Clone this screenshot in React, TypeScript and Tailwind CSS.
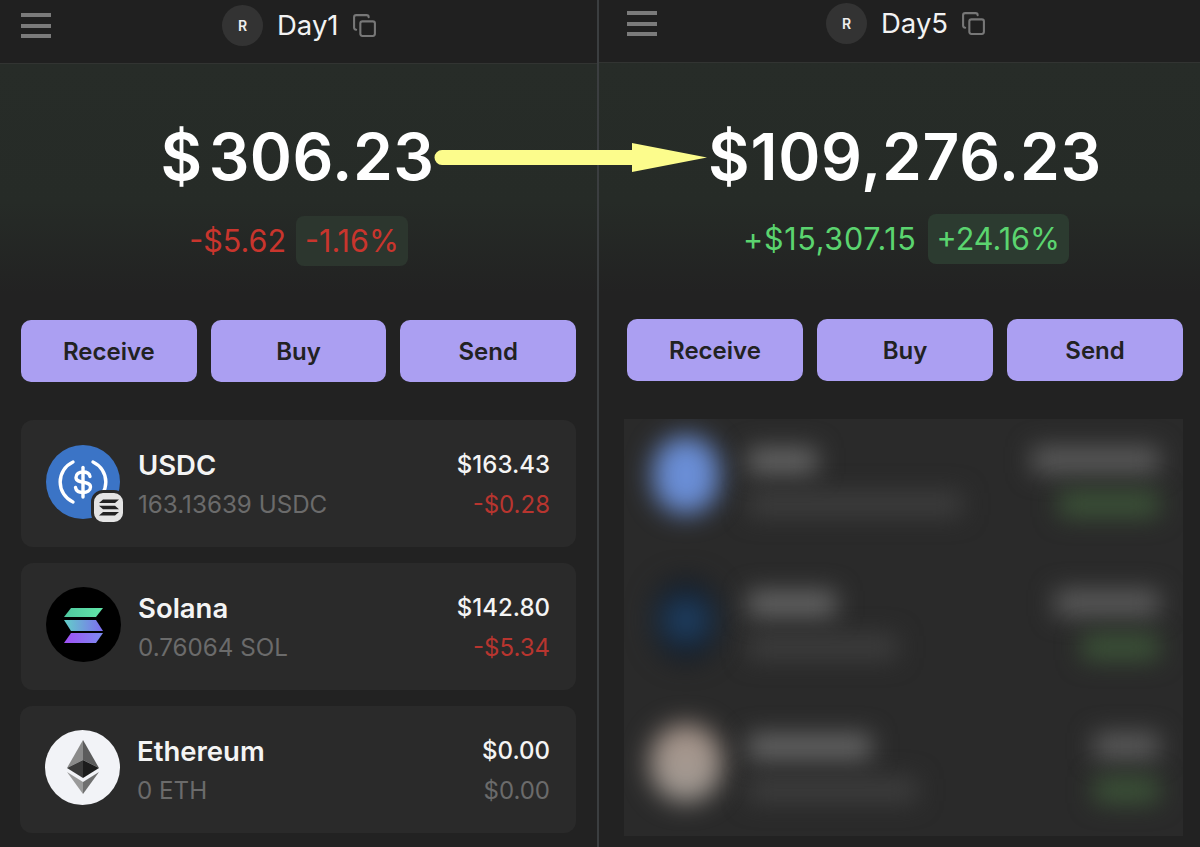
import { Copy } from "lucide-react";

function Hamburger() {
  return (
    <div className="flex w-[30px] flex-col gap-[6.5px] pt-[8px]">
      <div className="h-[4px] bg-[#7b7b7b]" />
      <div className="h-[4px] bg-[#7b7b7b]" />
      <div className="h-[4px] bg-[#7b7b7b]" />
    </div>
  );
}

function Header({ name, pad, gapLeft, height }: { name: string; pad: string; gapLeft: string; height: string }) {
  return (
    <div className={`flex items-start border-b border-[#323432] bg-[#202020] ${pad} ${height}`}>
      <Hamburger />
      <div className={`flex items-center ${gapLeft}`}>
        <div className="flex h-[41px] w-[41px] items-center justify-center rounded-full bg-[#333333] text-[14px] font-semibold text-[#eeeeee]">
          R
        </div>
        <div className="ml-[14px] text-[27.5px] leading-[41px] text-[#f2f2f2]">{name}</div>
        <Copy size={25} strokeWidth={2} className="ml-[13px] text-[#777777]" />
      </div>
    </div>
  );
}

function Buttons({ mt, textPad }: { mt: string; textPad: string }) {
  return (
    <div className={`flex gap-[14px] ${mt}`}>
      {["Receive", "Buy", "Send"].map((b) => (
        <div
          key={b}
          className={`flex h-[62px] flex-1 items-center justify-center rounded-[10px] bg-[#ab9ff2] text-[24px] font-semibold text-[#222222] ${textPad}`}
        >
          {b}
        </div>
      ))}
    </div>
  );
}

function UsdcIcon() {
  return (
    <div className="relative mb-[4px] h-[74px] w-[75px] shrink-0">
      <svg viewBox="0 0 74 74" className="h-[74px] w-[74px]">
        <circle cx="37" cy="37" r="37" fill="#3b74c6" />
        <path d="M27 17 A22 22 0 0 0 27 57" fill="none" stroke="#fff" strokeWidth="3.4" strokeLinecap="round" />
        <path d="M47 17 A22 22 0 0 1 47 57" fill="none" stroke="#fff" strokeWidth="3.4" strokeLinecap="round" />
        <path d="M44 31.5 C43.5 28.5 41 27 37 27 C33 27 30 29 30 32.5 C30 39.5 44.5 35 44.5 42 C44.5 45.5 41 47.5 37 47.5 C33 47.5 30 45.5 29.5 42.5" fill="none" stroke="#fff" strokeWidth="3.4" strokeLinecap="round" />
        <path d="M37 22.5 V52" stroke="#fff" strokeWidth="3.4" strokeLinecap="round" />
      </svg>
      <div className="absolute left-[45px] top-[45px] flex h-[35px] w-[35px] items-center justify-center rounded-[12px] border-[3px] border-[#2a2a2a] bg-[#e4e4e4]">
        <svg viewBox="0 0 20 16" className="h-[17px] w-[20px]">
          <path d="M4 0 H20 L16 3.6 H0 Z M0 6.2 H16 L20 9.8 H4 Z M4 12.4 H20 L16 16 H0 Z" fill="#222222" />
        </svg>
      </div>
    </div>
  );
}

function SolanaIcon() {
  return (
    <svg viewBox="0 0 75 75" className="mb-[4px] h-[75px] w-[75px] shrink-0">
      <defs>
        <linearGradient id="sol1" x1="0" y1="0" x2="1" y2="0">
          <stop offset="0" stopColor="#4fc8a0" />
          <stop offset="1" stopColor="#62e6a8" />
        </linearGradient>
        <linearGradient id="sol2" x1="0" y1="0" x2="1" y2="0">
          <stop offset="0" stopColor="#62d0c8" />
          <stop offset="1" stopColor="#7d6cf0" />
        </linearGradient>
        <linearGradient id="sol3" x1="0" y1="0" x2="1" y2="0">
          <stop offset="0" stopColor="#a04ff5" />
          <stop offset="1" stopColor="#7c8cf0" />
        </linearGradient>
      </defs>
      <circle cx="37.5" cy="37.5" r="37.5" fill="#000000" />
      <path d="M25 21 H57 L50 30 H18 Z" fill="url(#sol1)" />
      <path d="M18 33 H50 L57 44 H25 Z" fill="url(#sol2)" />
      <path d="M25 46 H57 L50 56 H18 Z" fill="url(#sol3)" />
    </svg>
  );
}

function EthIcon() {
  return (
    <svg viewBox="0 0 75 75" className="mb-[4px] h-[75px] w-[75px] shrink-0">
      <circle cx="37.5" cy="37.5" r="37.5" fill="#f2f3f7" />
      <path d="M38 10 L22 38 L38 30 Z" fill="#8a8a8a" />
      <path d="M38 10 L54 38 L38 30 Z" fill="#5c5c5c" />
      <path d="M38 30 L22 38 L38 48 Z" fill="#3a3a3a" />
      <path d="M38 30 L54 38 L38 48 Z" fill="#1c1c1c" />
      <path d="M22 42 L38 64 L38 52 Z" fill="#9a9a9a" />
      <path d="M54 42 L38 64 L38 52 Z" fill="#6f6f6f" />
    </svg>
  );
}

function Token({
  icon,
  name,
  sub,
  value,
  change,
  changeColor,
  extra,
}: {
  icon: React.ReactNode;
  name: string;
  sub: string;
  value: string;
  change: string;
  changeColor: string;
  extra?: string;
}) {
  return (
    <div className={`flex h-[127px] items-center rounded-[12px] bg-[#2a2a2a] pl-[25px] pr-[26px] ${extra ?? ""}`}>
      {icon}
      <div className="ml-[17px] flex-1 pt-[2px]">
        <div className="text-[27.5px] font-semibold leading-[40px] text-[#f4f4f4]">{name}</div>
        <div className="text-[24.2px] leading-[40px] text-[#6b6b6b]">{sub}</div>
      </div>
      <div className="pt-[2px] text-right">
        <div className="text-[24px] font-medium leading-[40px] text-[#f4f4f4]">{value}</div>
        <div className={`text-[24px] leading-[40px] ${changeColor}`}>{change}</div>
      </div>
    </div>
  );
}

const blurRows = [
  {
    circle: "h-[78px] w-[66px] mb-[28px] bg-[#6a8ed6]",
    bars: "mb-[14px]",
    name: "w-[69px]",
    sub: "w-[214px]",
    val: "w-[127px]",
    chg: "w-[100px]",
  },
  {
    circle: "h-[84px] w-[66px] mb-[16px] bg-[radial-gradient(circle,#1f4064_20%,#12151a_75%)]",
    bars: "mb-[6px]",
    name: "w-[88px]",
    sub: "w-[149px]",
    val: "w-[104px]",
    chg: "w-[77px]",
  },
  {
    circle: "h-[78px] w-[72px] mb-[8px] bg-[linear-gradient(#a8958a,#a09a94)]",
    bars: "mt-[2px]",
    name: "w-[123px]",
    sub: "w-[169px]",
    val: "w-[65px]",
    chg: "w-[65px]",
  },
];

function BlurRow({ r }: { r: (typeof blurRows)[number] }) {
  return (
    <div className="flex h-[139px] items-center pl-[25px] pr-[24px]">
      <div className="flex w-[74px] shrink-0 justify-center">
        <div className={`shrink-0 rounded-full blur-[13px] ${r.circle}`} />
      </div>
      <div className={`ml-[25px] flex flex-1 flex-col gap-[18px] ${r.bars}`}>
        <div className={`h-[26px] bg-[#666666] blur-[12px] ${r.name}`} />
        <div className={`h-[24px] bg-[#3e3e3e] blur-[12px] ${r.sub}`} />
      </div>
      <div className={`flex flex-col items-end gap-[18px] ${r.bars}`}>
        <div className={`h-[26px] bg-[#5c5c5c] blur-[12px] ${r.val}`} />
        <div className={`h-[26px] bg-[#3c5438] blur-[12px] ${r.chg}`} />
      </div>
    </div>
  );
}

export default function App() {
  return (
    <div className="relative flex h-[847px] w-[1200px] overflow-hidden bg-[#222222] font-['Inter',sans-serif]">
      {/* Day 1 */}
      <div className="w-[597px] shrink-0">
        <Header name="Day1" pad="pl-[21px] pt-[5px]" gapLeft="ml-[171px]" height="h-[64px]" />
        <div className="h-[230px] bg-[linear-gradient(#272c28_0%,#262b27_60%,#222222_100%)] pt-[61px]">
          <div className="flex justify-center pr-[2px] text-[64px] font-semibold leading-[64px] tracking-[0.5px] text-white">
            <span>$</span>
            <span className="ml-[6px]">306.23</span>
          </div>
          <div className="mt-[27px] flex items-center justify-center gap-[10px] text-[30.5px] text-[#c9352d]">
            <span>-$5.62</span>
            <span className="flex h-[50px] items-center rounded-[8px] bg-[#2c362e] px-[9px]">-1.16%</span>
          </div>
        </div>
        <div className="pl-[21px] pr-[21px]">
          <Buttons mt="mt-[26px]" textPad="pt-[2px]" />
          <div className="mt-[38px] flex flex-col gap-[16px]">
            <Token
              icon={<UsdcIcon />}
              name="USDC"
              sub="163.13639 USDC"
              value="$163.43"
              change="-$0.28"
              changeColor="text-[#b8352f]"
            />
            <Token
              icon={<SolanaIcon />}
              name="Solana"
              sub="0.76064 SOL"
              value="$142.80"
              change="-$5.34"
              changeColor="text-[#b8352f]"
            />
            <Token
              icon={<EthIcon />}
              name="Ethereum"
              sub="0 ETH"
              value="$0.00"
              change="$0.00"
              changeColor="text-[#6b6b6b]"
              extra="-ml-px"
            />
          </div>
        </div>
      </div>

      <div className="w-[2px] shrink-0 bg-[#3b3e40]" />

      {/* Day 5 */}
      <div className="flex-1">
        <Header name="Day5" pad="pl-[28px] pt-[3px]" gapLeft="ml-[169px]" height="h-[63px]" />
        <div className="h-[230px] bg-[linear-gradient(#272c28_0%,#262b27_60%,#222222_100%)] pt-[62px]">
          <div className="flex justify-center pl-[11px] text-[64px] font-semibold leading-[64px] tracking-[0.7px] text-white">
            $109,276.23
          </div>
          <div className="mt-[25px] flex items-center justify-center gap-[11px] pl-[13px] text-[30.5px] text-[#5bd46f]">
            <span className="tracking-[0.7px]">+$15,307.15</span>
            <span className="flex h-[50px] items-center rounded-[8px] bg-[#2c3b30] px-[9px]">+24.16%</span>
          </div>
        </div>
        <div className="pl-[28px] pr-[17px]">
          <Buttons mt="mt-[26px]" textPad="pt-[1px]" />
        </div>
        <div className="ml-[25px] mr-[17px] mt-[38px] overflow-hidden bg-[#2a2a2a]">
          {blurRows.map((r, i) => (
            <BlurRow key={i} r={r} />
          ))}
        </div>
      </div>

      {/* annotation arrow */}
      <svg viewBox="0 0 285 34" className="absolute left-[430px] top-[141px] h-[34px] w-[285px]">
        <path d="M12 9 H202 V2 L277 16.5 L202 31 V24 H12 A7.5 7.5 0 0 1 12 9 Z" fill="#fcfc8c" />
      </svg>
    </div>
  );
}
